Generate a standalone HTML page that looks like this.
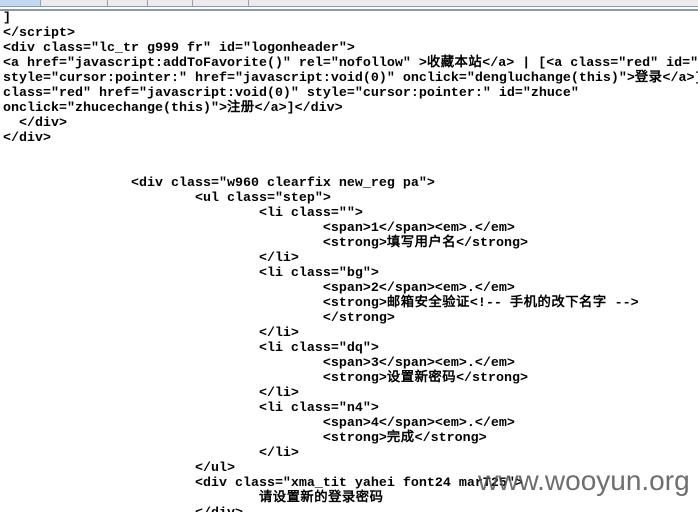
<!DOCTYPE html>
<html><head><meta charset="utf-8"><style>
html,body{margin:0;padding:0;background:#fff;width:698px;height:512px;overflow:hidden;position:relative}
.bar{position:absolute;left:0;top:0;width:698px;height:6px;background:#ececec}
.tab{position:absolute;top:0;height:6px;border-right:1px solid #a0a0a0}
.blue{position:absolute;left:0;top:6px;width:698px;height:1px;background:#7a9bd0}
.gline{position:absolute;left:0;top:9px;width:698px;height:2px;background:#8c9aa8}
pre{position:absolute;left:3px;top:11px;margin:0;font-family:"Liberation Mono","WenQuanYi Zen Hei",monospace;font-weight:bold;font-size:13.33px;line-height:15px;color:#000}
.c{letter-spacing:0.5px}
.wm{position:absolute;left:478px;top:465px;font-family:"Liberation Sans",sans-serif;font-size:28px;color:#555;opacity:.85}
</style></head><body>
<div class="bar"></div>
<div class="tab" style="left:0;width:40px;background:#c4d9f0"></div>
<div class="tab" style="left:41px;width:66px"></div>
<div class="tab" style="left:108px;width:39px"></div>
<div class="tab" style="left:148px;width:44px"></div>
<div class="tab" style="left:193px;width:55px"></div>
<div class="blue"></div><div class="gline"></div>
<pre>]
&lt;/script&gt;
&lt;div class="lc_tr g999 fr" id="logonheader"&gt;
&lt;a href="javascript:addToFavorite()" rel="nofollow" &gt;<span class="c">收藏本站</span>&lt;/a&gt; | [&lt;a class="red" id="
style="cursor:pointer:" href="javascript:void(0)" onclick="dengluchange(this)"&gt;<span class="c">登录</span>&lt;/a&gt;]
class="red" href="javascript:void(0)" style="cursor:pointer:" id="zhuce"
onclick="zhucechange(this)"&gt;<span class="c">注册</span>&lt;/a&gt;]&lt;/div&gt;
  &lt;/div&gt;
&lt;/div&gt;


                &lt;div class="w960 clearfix new_reg pa"&gt;
                        &lt;ul class="step"&gt;
                                &lt;li class=""&gt;
                                        &lt;span&gt;1&lt;/span&gt;&lt;em&gt;.&lt;/em&gt;
                                        &lt;strong&gt;<span class="c">填写用户名</span>&lt;/strong&gt;
                                &lt;/li&gt;
                                &lt;li class="bg"&gt;
                                        &lt;span&gt;2&lt;/span&gt;&lt;em&gt;.&lt;/em&gt;
                                        &lt;strong&gt;<span class="c">邮箱安全验证</span>&lt;!-- <span class="c">手机的改下名字</span> --&gt;
                                        &lt;/strong&gt;
                                &lt;/li&gt;
                                &lt;li class="dq"&gt;
                                        &lt;span&gt;3&lt;/span&gt;&lt;em&gt;.&lt;/em&gt;
                                        &lt;strong&gt;<span class="c">设置新密码</span>&lt;/strong&gt;
                                &lt;/li&gt;
                                &lt;li class="n4"&gt;
                                        &lt;span&gt;4&lt;/span&gt;&lt;em&gt;.&lt;/em&gt;
                                        &lt;strong&gt;<span class="c">完成</span>&lt;/strong&gt;
                                &lt;/li&gt;
                        &lt;/ul&gt;
                        &lt;div class="xma_tit yahei font24 marT25"&gt;
                                <span class="c">请设置新的登录密码</span>
                        &lt;/div&gt;</pre>
<div class="wm">www.wooyun.org</div>
</body></html>
